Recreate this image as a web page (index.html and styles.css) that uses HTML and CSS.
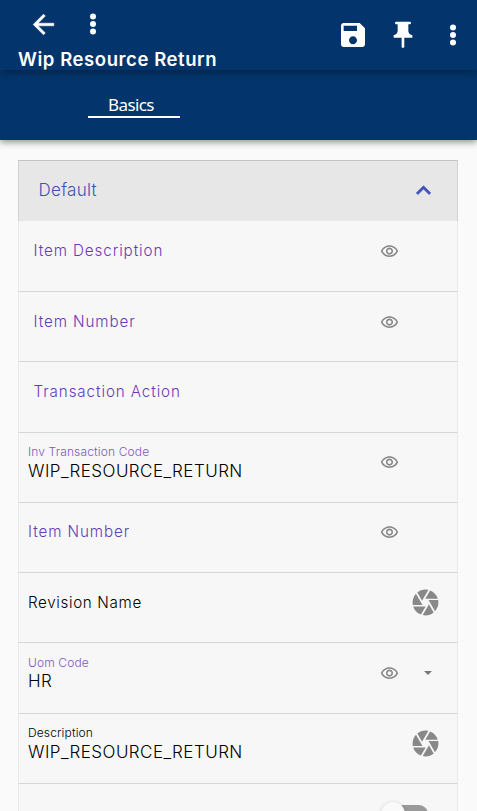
FILE: index.html
```html
<!DOCTYPE html>
<html lang="en">
<head>
<meta charset="utf-8">
<title>Wip Resource Return</title>
<link rel="stylesheet" href="styles.css">
</head>
<body>
<svg class="defs" aria-hidden="true">
  <symbol id="more" viewBox="0 0 24 24"><circle cx="12" cy="6" r="2.4"/><circle cx="12" cy="12" r="2.4"/><circle cx="12" cy="18" r="2.4"/></symbol>
  <symbol id="eye" viewBox="0 0 24 24"><path d="M12 6c3.79 0 7.17 2.13 8.82 5.5C19.17 14.87 15.79 17 12 17s-7.17-2.13-8.82-5.5C4.83 8.13 8.21 6 12 6m0-2C7 4 2.73 7.11 1 11.5 2.73 15.89 7 19 12 19s9.27-3.11 11-7.5C21.27 7.11 17 4 12 4zm0 5c1.38 0 2.5 1.12 2.5 2.5S13.38 14 12 14s-2.5-1.12-2.5-2.5S10.620 9 12 9m0-2c-2.480 0-4.500 2.020-4.500 4.500S9.520 16 12 16s4.500-2.020 4.500-4.500S14.480 7 12 7z"/></symbol>
  <symbol id="camera" viewBox="0 0 24 24"><path d="M9.400 10.500l4.770-8.260C13.470 2.090 12.750 2 12 2c-2.400 0-4.600.850-6.320 2.250l3.660 6.350.06-.1zM21.540 9c-.920-2.920-3.150-5.260-6-6.340L11.880 9h9.660zm.260 1h-7.490l.290.500 4.760 8.250C21 16.970 22 14.610 22 12c0-.690-.070-1.350-.200-2zM8.540 12l-3.900-6.750C3.010 7.030 2 9.390 2 12c0 .690.070 1.350.200 2h7.490l-1.150-2zm-6.080 3c.920 2.920 3.150 5.260 6 6.340L12.120 15H2.460zm11.270 0l-3.900 6.760c.700.150 1.420.240 2.170.240 2.400 0 4.600-.850 6.320-2.250l-3.660-6.350-.930 1.600z"/></symbol>
</svg>
<header class="appbar">
  <div class="heading">
    <div class="nav">
      <svg class="icon-back" viewBox="0 0 24 24"><path d="M20 11H7.830l5.590-5.590L12 4l-8 8 8 8 1.410-1.410L7.830 13H20z"/></svg>
      <svg class="icon-more"><use href="#more"/></svg>
    </div>
    <h1>Wip Resource Return</h1>
  </div>
  <div class="actions">
    <svg class="icon-action" viewBox="0 0 24 24"><path d="M17 3H5c-1.110 0-2 .900-2 2v14c0 1.100.890 2 2 2h14c1.100 0 2-.900 2-2V7l-4-4zm-5 16c-1.660 0-3-1.340-3-3s1.340-3 3-3 3 1.340 3 3-1.340 3-3 3zm3-10H5V5h10v4z"/></svg>
    <svg class="icon-action" viewBox="0 0 24 24"><path d="M16 9V4h1c.550 0 1-.450 1-1s-.450-1-1-1H7c-.550 0-1 .450-1 1s.450 1 1 1h1v5c0 1.660-1.340 3-3 3v2h5.970v7l1 1 1-1v-7H19v-2c-1.660 0-3-1.340-3-3z"/></svg>
    <svg class="icon-more"><use href="#more"/></svg>
  </div>
</header>
<nav class="tabs"><span class="tab">Basics</span></nav>
<main class="panel">
  <div class="panel-head">
    <h2>Default</h2>
    <svg class="icon-chevron" viewBox="0 0 24 24"><path d="M12 8l-6 6 1.410 1.410L12 10.830l4.590 4.580L18 14z"/></svg>
  </div>
  <div class="row indent"><div class="field"><span class="label">Item Description</span></div><svg class="eye"><use href="#eye"/></svg></div>
  <div class="row indent"><div class="field"><span class="label">Item Number</span></div><svg class="eye"><use href="#eye"/></svg></div>
  <div class="row indent"><div class="field"><span class="label">Transaction Action</span></div></div>
  <div class="row"><div class="field"><span class="caption">Inv Transaction Code</span><span class="value">WIP_RESOURCE_RETURN</span></div><svg class="eye"><use href="#eye"/></svg></div>
  <div class="row"><div class="field"><span class="label">Item Number</span></div><svg class="eye"><use href="#eye"/></svg></div>
  <div class="row"><div class="field"><span class="label dark">Revision Name</span></div><svg class="camera"><use href="#camera"/></svg></div>
  <div class="row"><div class="field"><span class="caption">Uom Code</span><span class="value">HR</span></div><svg class="eye"><use href="#eye"/></svg><svg class="caret" viewBox="0 0 8 4"><path d="M0 0h8L4 4z"/></svg></div>
  <div class="row"><div class="field"><span class="caption dark">Description</span><span class="value">WIP_RESOURCE_RETURN</span></div><svg class="camera"><use href="#camera"/></svg></div>
  <div class="row last"><div class="field"></div><div class="switch"><div class="knob"></div></div></div>
</main>
</body>
</html>
```
FILE: styles.css
```css
* { box-sizing: border-box; }
body {
  margin: 0;
  height: 811px;
  overflow: hidden;
  background: #fafafa;
  color: #111;
  font-family: Inter, "Noto Sans", sans-serif;
}
svg { display: block; flex: none; fill: currentColor; }
.defs { display: none; }
h1, h2 { margin: 0; }

.appbar {
  position: relative;
  z-index: 1;
  height: 70px;
  display: flex;
  justify-content: space-between;
  color: #fff;
  background: #03346b;
  box-shadow: 0 2px 8px rgba(0, 0, 0, .35);
}
.heading { padding: 8px 0 0 18px; }
.nav { display: flex; align-items: center; gap: 19px; height: 32px; padding-left: 10px; }
.icon-back { width: 31px; height: 31px; stroke: currentColor; stroke-width: .4; }
.icon-more { width: 30px; height: 30px; }
h1 {
  margin-top: 6px;
  font-size: 18.5px;
  line-height: 27px;
  font-weight: 600;
  letter-spacing: .57px;
  white-space: nowrap;
}
.actions { display: flex; align-items: center; gap: 18px; padding-right: 9px; }
.actions .icon-more { margin-left: 1px; }
.icon-action { width: 32px; height: 32px; }

.tabs {
  height: 70px;
  padding: 22px 0 0 88px;
  background: #03346b;
  box-shadow: 0 2px 7px rgba(0, 0, 0, .45);
}
.tab {
  display: block;
  width: 91.500px;
  height: 26px;
  padding-left: 20px;
  border-bottom: 2px solid #fff;
  color: #fff;
  font: 17px/25px "Noto Sans", sans-serif;
  letter-spacing: -.6px;
}

.panel { width: 440px; margin: 20px 0 0 18px; }
.panel-head {
  height: 61px;
  display: flex;
  align-items: center;
  justify-content: space-between;
  padding: 0 22.500px 2px 19.500px;
  background: #e7e7e7;
  border: 1px solid #d2d2d2;
  border-top-color: #c3c3c3;
  border-bottom: 0;
  color: #3f51b5;
}
h2 { font-size: 17px; font-weight: 350; line-height: 24px; letter-spacing: .3px; }
.icon-chevron { width: 29px; height: 29px; margin: 1px -3px 0 0; stroke: currentColor; stroke-width: .5; }

.row {
  height: 70.3px;
  display: flex;
  align-items: flex-start;
  background: #f7f7f7;
  border: 1px solid #e8eaeb;
  border-top: 0;
  border-bottom-color: #d2d8da;
}
.panel-head + .row { height: 71px; }
.field { width: 361px; padding: 11.500px 0 0 9px; display: flex; flex-direction: column; white-space: nowrap; }
.indent .field { padding-left: 14.500px; }
.label { margin-top: 6px; font-size: 15.200px; line-height: 24px; font-weight: 350; letter-spacing: .9px; color: #673ab7; }
.label.dark { letter-spacing: .65px; }
.caption { font-size: 12px; line-height: 15px; font-weight: 350; letter-spacing: .14px; color: #7e57c2; }
.value { margin-top: .5px; font-size: 17px; line-height: 22px; font-weight: 350; letter-spacing: .45px; color: #000; }
.dark { color: #000; }
.eye { width: 19px; height: 19px; margin-top: 20.500px; color: #888; }
.caret { width: 8px; height: 4px; margin: 28px 0 0 25px; color: #777; }
.camera { width: 31px; height: 31px; margin: 14px 0 0 30px; color: #888; }
.last { height: 27px; overflow: hidden; border-bottom: 0; }
.switch { width: 34px; height: 18px; margin: 20.500px 0 0 14px; border-radius: 9px; background: #9a9a9a; }
.knob { width: 24px; height: 24px; margin: -3px 0 0 -13px; border-radius: 50%; background: #fafafa; box-shadow: 0 1px 4px rgba(0, 0, 0, .2); }
```
